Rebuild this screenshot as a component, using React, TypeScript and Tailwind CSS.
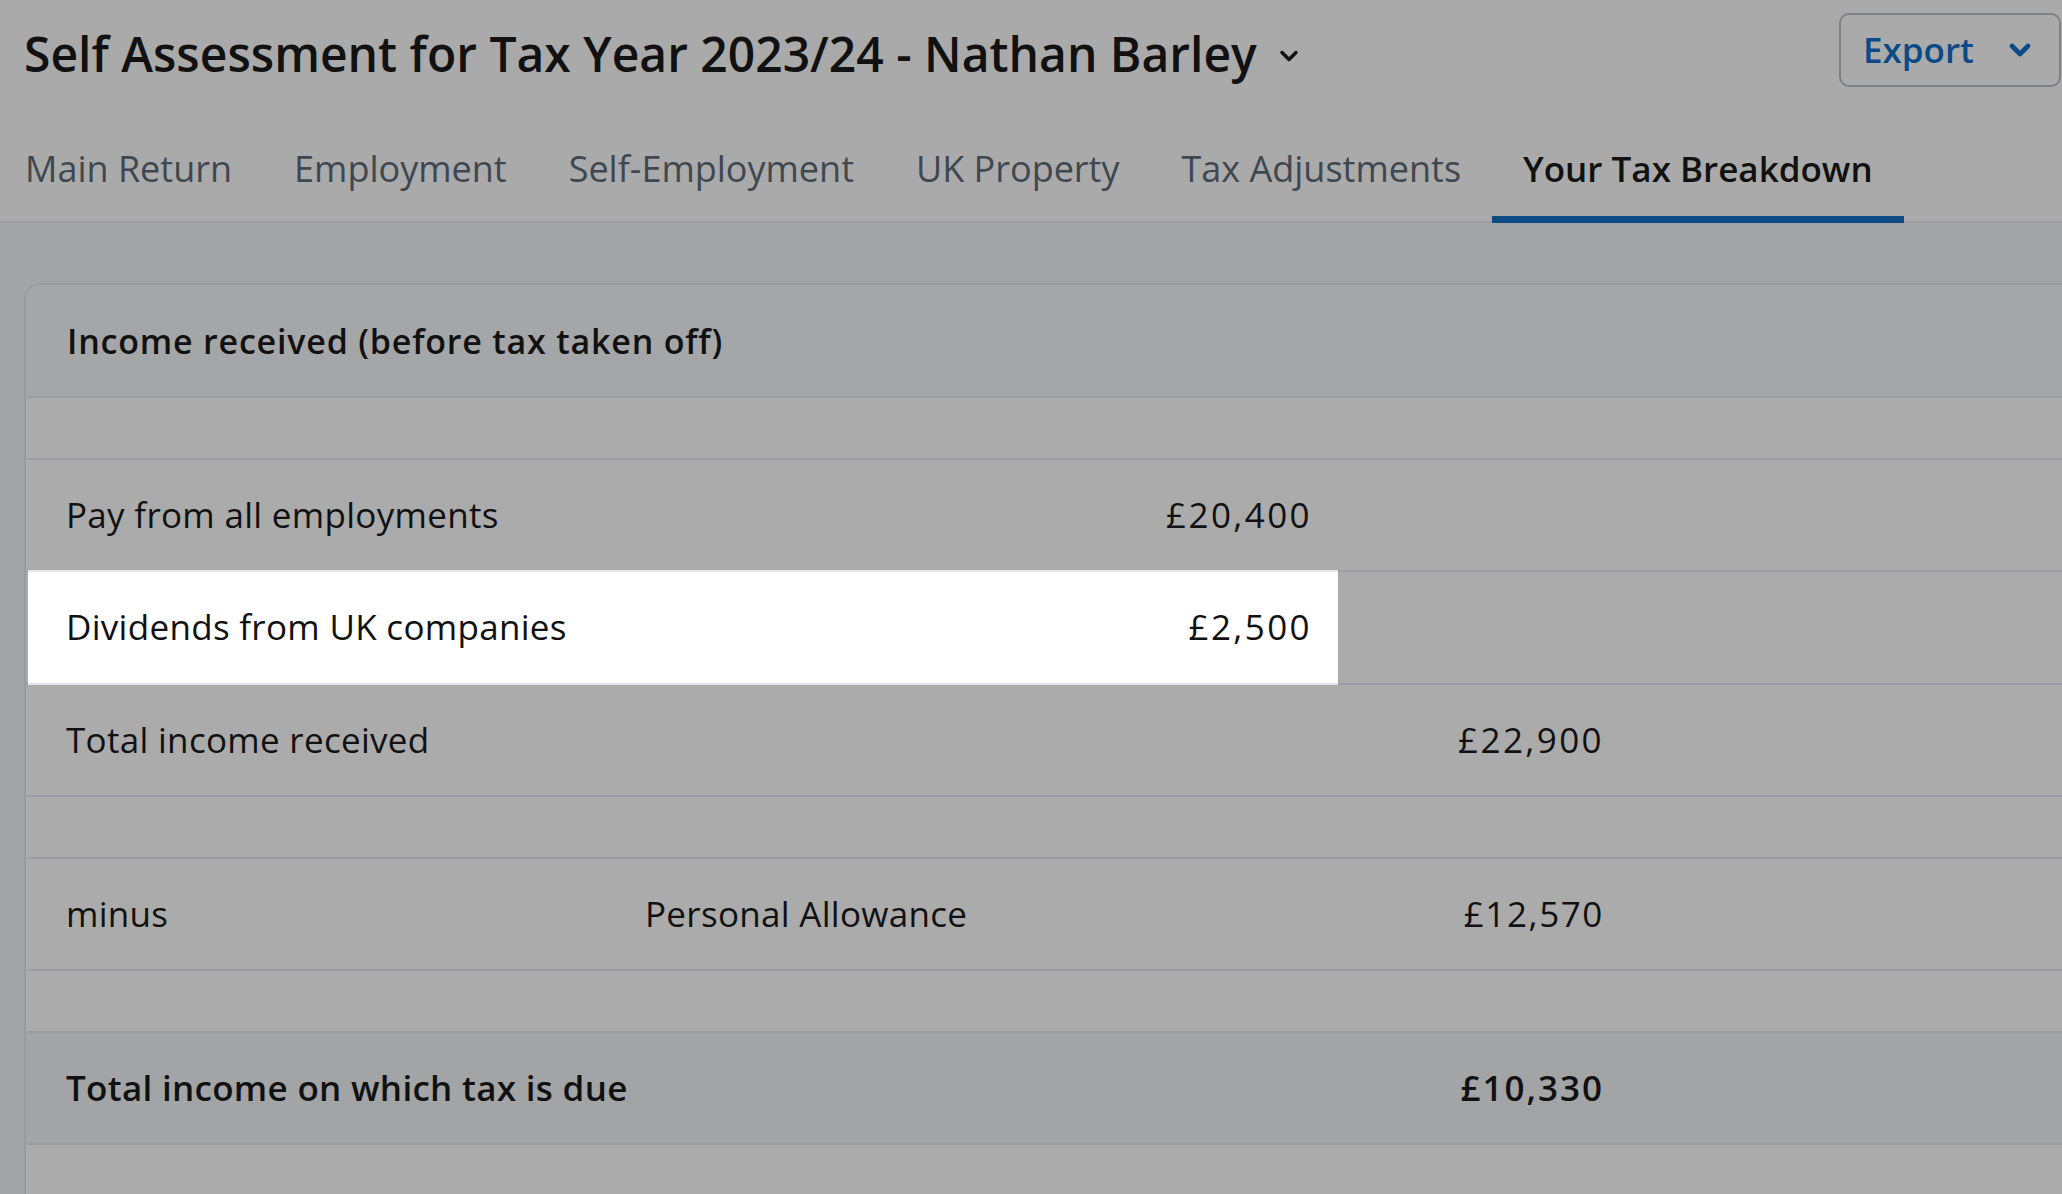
import { ChevronDown } from "lucide-react";

const TABS = ["Main Return", "Employment", "Self-Employment", "UK Property", "Tax Adjustments", "Your Tax Breakdown"];
const ACTIVE_TAB = "Your Tax Breakdown";

function Spacer() {
  return <div className="h-[62px] border-b-2 border-[#9c9da1]" />;
}

export default function App() {
  return (
    <div className="min-h-screen h-[1194px] overflow-hidden bg-[#a2a4a8] text-[#111111] font-['Open_Sans','Liberation_Sans',sans-serif]">
      {/* Header */}
      <div className="bg-[#aaaaaa]">
        <div className="flex h-[100px] items-center justify-between pl-[24px] pr-[1px]">
          <div className="mt-[7px] flex items-center gap-[18px]">
            <h1 className="text-[48px] font-semibold leading-none">
              Self Assessment for Tax Year 2023/24 - Nathan Barley
            </h1>
            <ChevronDown className="mt-[4px] h-[28px] w-[28px]" strokeWidth={3} />
          </div>
          <button className="flex h-[74px] w-[222px] items-center gap-[30px] rounded-[10px] border-2 border-[#7e8185] pl-[22px] text-[#0b4a88]">
            <span className="text-[35px] font-semibold">Export</span>
            <ChevronDown className="h-[32px] w-[32px]" strokeWidth={3.5} />
          </button>
        </div>

        {/* Tabs */}
        <div className="flex h-[123px] border-b-2 border-[#9c9da1] pl-[25px]">
          {TABS.map((tab, i) => {
            const active = tab === ACTIVE_TAB;
            return (
              <div
                key={tab}
                className={
                  "-mb-[2px] flex h-[123px] flex-col pt-[49px] " +
                  (i === 0 ? "pr-[31px] " : "px-[31px] ") +
                  (active ? "border-b-[7px] border-[#0b4a85] text-[#111111] font-semibold" : "border-b-[7px] border-transparent text-[#3f4850]")
                }
              >
                <span className={(active ? "text-[35px] " : "text-[36px] ") + "leading-[40px] whitespace-nowrap"}>{tab}</span>
              </div>
            );
          })}
        </div>
      </div>

      {/* Breakdown card */}
      <div className="ml-[24px] mr-[-40px] mt-[60px] rounded-tl-[16px] border-l-2 border-t-2 border-[#999b9e] bg-[#ababab] text-[35px] tracking-[0.3px]">
        <div className="flex h-[113px] items-center rounded-tl-[14px] border-b-2 border-[#9c9da1] bg-[#a5a6a8] pl-[41px]">
          <span className="mt-[2px] text-[34px] font-semibold tracking-[0.8px]">Income received (before tax taken off)</span>
        </div>

        <Spacer />

        <div className="grid h-[112px] grid-cols-[591px_721px_292px_1fr] items-center border-b-2 border-[#9c9da1]">
          <span className="pl-[40px]">Pay from all employments</span>
          <span className="pr-[26px] text-right tracking-[2.4px]">£20,400</span>
        </div>

        <div className="grid h-[113px] grid-cols-[591px_721px_292px_1fr] border-b-2 border-[#9c9da1]">
          <div className="col-span-2 ml-[2px] -mt-[2px] flex h-[115px] items-center justify-between border-y-2 border-[#e4e6e9] bg-white pl-[38px] pr-[26px]">
            <span>Dividends from UK companies</span>
            <span className="tracking-[2.4px]">£2,500</span>
          </div>
        </div>

        <div className="grid h-[112px] grid-cols-[591px_721px_292px_1fr] items-center border-b-2 border-[#9c9da1]">
          <span className="pl-[40px]">Total income received</span>
          <span />
          <span className="pr-[26px] text-right tracking-[2.4px]">£22,900</span>
        </div>

        <Spacer />

        <div className="grid h-[112px] grid-cols-[591px_721px_292px_1fr] items-center border-b-2 border-[#9c9da1]">
          <span className="pl-[40px]">minus</span>
          <span className="pl-[28px]">Personal Allowance</span>
          <span className="pr-[26px] text-right tracking-[1.6px]">£12,570</span>
        </div>

        <Spacer />

        <div className="grid h-[112px] grid-cols-[591px_721px_292px_1fr] items-center border-b-2 border-[#9c9da1] bg-[#a3a4a6] font-semibold">
          <span className="pl-[40px] whitespace-nowrap">Total income on which tax is due</span>
          <span />
          <span className="pr-[26px] text-right tracking-[2px]">£10,330</span>
        </div>

        <div className="h-[80px]" />
      </div>
    </div>
  );
}
